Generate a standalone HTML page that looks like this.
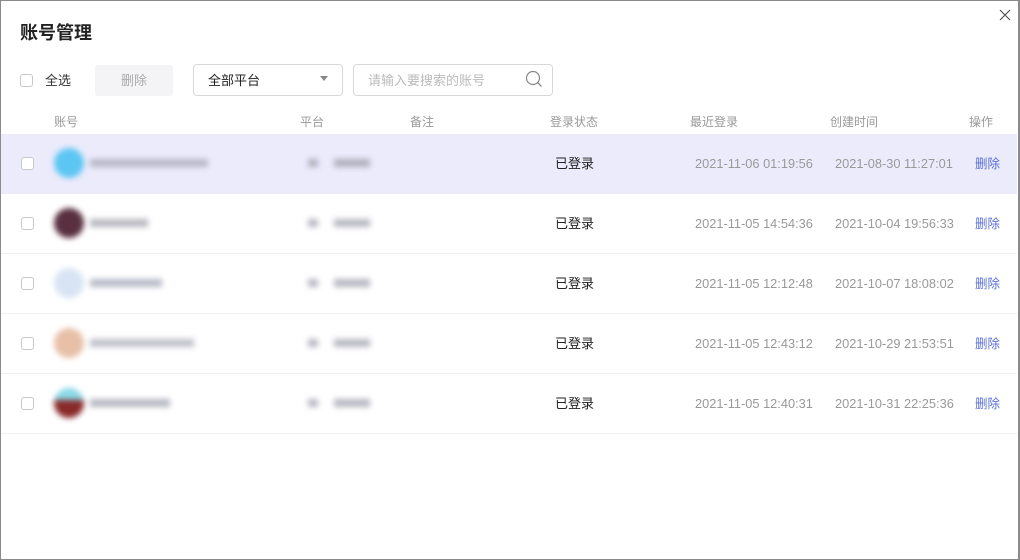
<!DOCTYPE html>
<html><head><meta charset="utf-8"><style>
*{margin:0;padding:0;box-sizing:border-box}
body{width:1020px;height:560px;background:#fff;font-family:"Liberation Sans","Noto Sans CJK SC",sans-serif;position:relative;overflow:hidden}
.frame{position:absolute;left:0;top:0;width:1020px;height:560px;border:1px solid #8a8a8a;border-right:2px solid #8a8a8a}
.a{position:absolute;line-height:16px}
.title{left:20px;top:23px;font-size:18px;line-height:20px;font-weight:bold;color:#222}
.cb{width:13px;height:13px;border:1px solid #c8c8c8;border-radius:3px;background:#fff}
.hdr{top:114px;font-size:12px;color:#999}
.row{position:absolute;left:1px;width:1016px;height:60px;border-bottom:1px solid #f0f0f0}
.t{font-size:12.8px;color:#999}
.blur{filter:blur(3px)}
</style></head><body>
<div class="a title">账号管理</div>
<svg class="a" style="left:999px;top:9px" width="12" height="12"><path d="M1 1L11 11M11 1L1 11" stroke="#555" stroke-width="1.2"/></svg>
<div class="a cb" style="left:20px;top:74px"></div>
<div class="a" style="left:45px;top:73px;font-size:13px;color:#333">全选</div>
<div class="a" style="left:95px;top:65px;width:78px;height:31px;background:#f4f4f6;border-radius:3px;color:#aaa;font-size:13px;text-align:center;line-height:31px">删除</div>
<div class="a" style="left:193px;top:64px;width:150px;height:32px;border:1px solid #d8d8d8;border-radius:4px;font-size:13px;color:#222;padding-left:14px;line-height:31px">全部平台</div>
<div class="a" style="left:320px;top:76px;width:0;height:0;border-left:4px solid transparent;border-right:4px solid transparent;border-top:5px solid #888"></div>
<div class="a" style="left:353px;top:64px;width:200px;height:32px;border:1px solid #d8d8d8;border-radius:4px;font-size:13px;color:#bbb;padding-left:14px;line-height:31px">请输入要搜索的账号</div>
<svg class="a" style="left:525px;top:70px" width="18" height="18"><circle cx="8" cy="8" r="6.5" stroke="#888" stroke-width="1.2" fill="none"/><path d="M12.7 12.7L16.5 16.5" stroke="#888" stroke-width="1.3"/></svg>
<div class="a hdr" style="left:54px">账号</div>
<div class="a hdr" style="left:300px">平台</div>
<div class="a hdr" style="left:410px">备注</div>
<div class="a hdr" style="left:550px">登录状态</div>
<div class="a hdr" style="left:690px">最近登录</div>
<div class="a hdr" style="left:830px">创建时间</div>
<div class="a hdr" style="left:969px">操作</div>

<div class="row" style="top:134px;background:#ecebfc;border-bottom:none"></div>
<div class="row" style="top:194px"></div>
<div class="row" style="top:254px"></div>
<div class="row" style="top:314px"></div>
<div class="row" style="top:374px"></div>

<div class="a cb" style="left:21px;top:157px"></div>
<div class="a blur" style="left:54px;top:148px;width:30px;height:30px;border-radius:50%;background:#5cc6f2"></div>
<div class="a blur" style="left:90px;top:159px;width:118px;height:8px;background:#b8b8c8"></div>
<div class="a blur" style="left:308px;top:159px;width:10px;height:8px;background:#b0b0bc"></div>
<div class="a blur" style="left:334px;top:159px;width:36px;height:8px;background:#b0b0bc"></div>
<div class="a" style="left:555px;top:156px;font-size:13px;color:#222">已登录</div>
<div class="a t" style="left:695px;top:156px">2021-11-06 01:19:56</div>
<div class="a t" style="left:835px;top:156px">2021-08-30 11:27:01</div>
<div class="a" style="left:975px;top:156px;font-size:12.5px;color:#5b6fd6">删除</div>

<div class="a cb" style="left:21px;top:217px"></div>
<div class="a blur" style="left:54px;top:208px;width:30px;height:30px;border-radius:50%;background:#5a3040"></div>
<div class="a blur" style="left:90px;top:219px;width:58px;height:8px;background:#b8b8c0"></div>
<div class="a blur" style="left:308px;top:219px;width:10px;height:8px;background:#b8b8c4"></div>
<div class="a blur" style="left:334px;top:219px;width:36px;height:8px;background:#b8b8c4"></div>
<div class="a" style="left:555px;top:216px;font-size:13px;color:#222">已登录</div>
<div class="a t" style="left:695px;top:216px">2021-11-05 14:54:36</div>
<div class="a t" style="left:835px;top:216px">2021-10-04 19:56:33</div>
<div class="a" style="left:975px;top:216px;font-size:12.5px;color:#5b6fd6">删除</div>

<div class="a cb" style="left:21px;top:277px"></div>
<div class="a blur" style="left:54px;top:268px;width:30px;height:30px;border-radius:50%;background:#d8e4f4"></div>
<div class="a blur" style="left:90px;top:279px;width:72px;height:8px;background:#b8bcc8"></div>
<div class="a blur" style="left:308px;top:279px;width:10px;height:8px;background:#b8b8c4"></div>
<div class="a blur" style="left:334px;top:279px;width:36px;height:8px;background:#b8b8c4"></div>
<div class="a" style="left:555px;top:276px;font-size:13px;color:#222">已登录</div>
<div class="a t" style="left:695px;top:276px">2021-11-05 12:12:48</div>
<div class="a t" style="left:835px;top:276px">2021-10-07 18:08:02</div>
<div class="a" style="left:975px;top:276px;font-size:12.5px;color:#5b6fd6">删除</div>

<div class="a cb" style="left:21px;top:337px"></div>
<div class="a blur" style="left:54px;top:328px;width:30px;height:30px;border-radius:50%;background:#e8c0a8"></div>
<div class="a blur" style="left:90px;top:339px;width:104px;height:8px;background:#c0c0cc"></div>
<div class="a blur" style="left:308px;top:339px;width:10px;height:8px;background:#b8b8c4"></div>
<div class="a blur" style="left:334px;top:339px;width:36px;height:8px;background:#b8b8c4"></div>
<div class="a" style="left:555px;top:336px;font-size:13px;color:#222">已登录</div>
<div class="a t" style="left:695px;top:336px">2021-11-05 12:43:12</div>
<div class="a t" style="left:835px;top:336px">2021-10-29 21:53:51</div>
<div class="a" style="left:975px;top:336px;font-size:12.5px;color:#5b6fd6">删除</div>

<div class="a cb" style="left:21px;top:397px"></div>
<div class="a blur" style="left:54px;top:388px;width:30px;height:30px;border-radius:50%;background:linear-gradient(#8ad8e8 40%,#8a2a2a 40%)"></div>
<div class="a blur" style="left:90px;top:399px;width:80px;height:8px;background:#b8b8c4"></div>
<div class="a blur" style="left:308px;top:399px;width:10px;height:8px;background:#b8b8c4"></div>
<div class="a blur" style="left:334px;top:399px;width:36px;height:8px;background:#b8b8c4"></div>
<div class="a" style="left:555px;top:396px;font-size:13px;color:#222">已登录</div>
<div class="a t" style="left:695px;top:396px">2021-11-05 12:40:31</div>
<div class="a t" style="left:835px;top:396px">2021-10-31 22:25:36</div>
<div class="a" style="left:975px;top:396px;font-size:12.5px;color:#5b6fd6">删除</div>

<div class="frame"></div>
</body></html>
